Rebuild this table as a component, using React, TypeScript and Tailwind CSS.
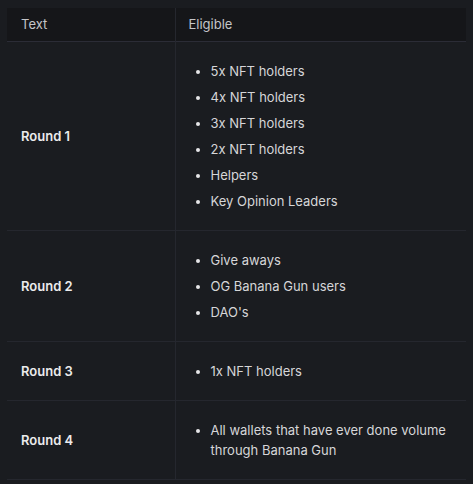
const rows: { label: string; items: string[] }[] = [
  {
    label: "Round 1",
    items: [
      "5x NFT holders",
      "4x NFT holders",
      "3x NFT holders",
      "2x NFT holders",
      "Helpers",
      "Key Opinion Leaders",
    ],
  },
  { label: "Round 2", items: ["Give aways", "OG Banana Gun users", "DAO's"] },
  { label: "Round 3", items: ["1x NFT holders"] },
  {
    label: "Round 4",
    items: ["All wallets that have ever done volume through Banana Gun"],
  },
];

export default function App() {
  return (
    <div
      className="min-h-[484px] w-[473px] bg-[#1a1c20] pt-2 pl-[7px]"
      style={{ fontFamily: "Inter, 'Noto Sans', sans-serif" }}
    >
      <table className="w-[459px] border-collapse text-[13px] leading-5">
        <thead>
          <tr className="h-[33px] border-b border-[#2b2c36] bg-[#151619] text-left">
            <th className="w-[168px] border-r border-[#25272e] px-[14px] font-normal text-[#c4c5c8]">
              Text
            </th>
            <th className="px-[13px] font-normal text-[#c4c5c8]">Eligible</th>
          </tr>
        </thead>
        <tbody>
          {rows.map((row) => (
            <tr key={row.label} className="border-b border-[#25272e]">
              <td className="border-r border-[#25272e] px-[14px] font-semibold text-[#ebebec]">
                {row.label}
              </td>
              <td className="px-[13px] py-[19px] text-[#d6d6d8]">
                <ul className="flex list-disc flex-col gap-[6px] pl-[22px] marker:text-[#e6e6e8]">
                  {row.items.map((item) => (
                    <li key={item}>{item}</li>
                  ))}
                </ul>
              </td>
            </tr>
          ))}
        </tbody>
      </table>
    </div>
  );
}
